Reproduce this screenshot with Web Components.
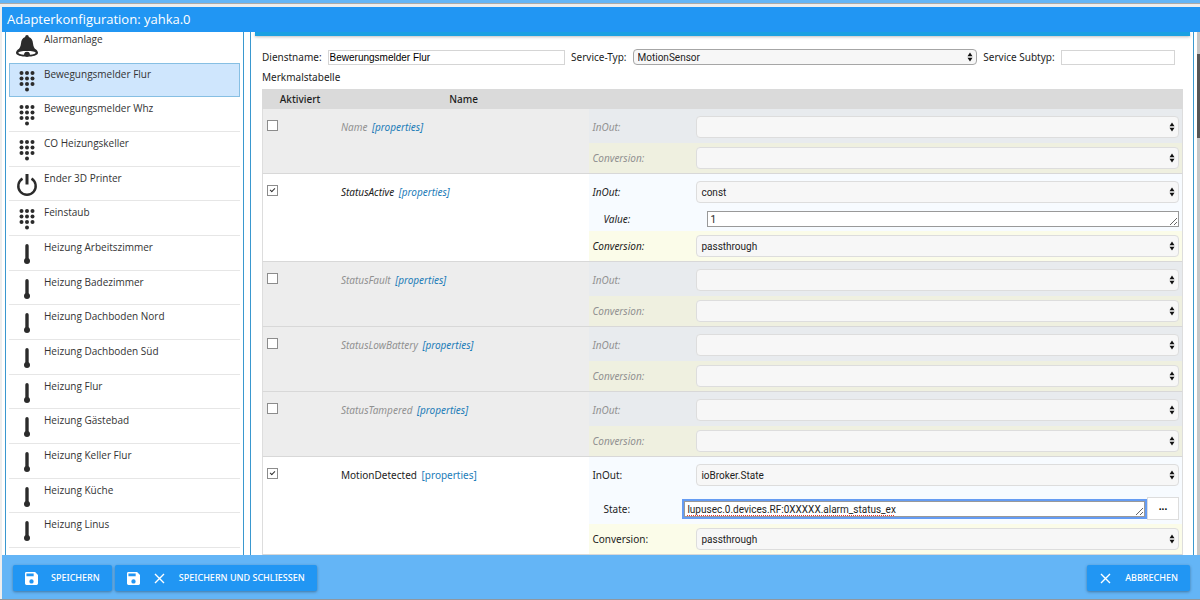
<!DOCTYPE html>
<html lang="de">
<head>
<meta charset="utf-8">
<title>Adapterkonfiguration: yahka.0</title>
<style>
  html, body {
    height: 100%;
    margin: 0;
  }

  body {
    background: #eee;
    color: #1d1d1d;
    font: 10px/16px "Noto Sans", "Open Sans", sans-serif;
    overflow: hidden;
  }
</style>
</head>
<body>
<adapter-dialog heading="Adapterkonfiguration: yahka.0">
  <device-list slot="sidebar"></device-list>
  <service-panel></service-panel>
  <dialog-button slot="save" icons="save">Speichern</dialog-button>
  <dialog-button slot="save" icons="save close">Speichern und schließen</dialog-button>
  <dialog-button slot="cancel" icons="close">Abbrechen</dialog-button>
</adapter-dialog>

<script>
const ICONS = {
  bell: `<svg viewBox="0 0 24 24" width="24" height="24" fill="#2b2b2b">
    <path d="M12 1c-1.100 0-1.800.8-1.800 1.900C7.200 3.800 6.300 6.300 6 9.500c-.3 3-1.300 4.900-3.200 6.500h18.400c-1.900-1.600-2.900-3.500-3.200-6.500-.3-3.200-1.200-5.700-4.200-6.600C13.800 1.800 13.100 1 12 1z"/>
    <path d="M3 15.500C1.700 16.700 1 17.700 1 18.700 1 21.200 6 22.600 12 22.600s11-1.400 11-3.900c0-1-.7-2-2-3.200zM12 17c5 0 8.600.6 8.600 1.700 0 .9-2.300 1.700-5.700 2 .1-1.800-1.200-2.900-2.900-2.900s-3 1.100-2.900 2.900c-3.400-.3-5.700-1.100-5.700-2C3.400 17.600 7 17 12 17z" fill-rule="evenodd"/>
    <circle cx="12" cy="20.500" r="2.400"/>
  </svg>`,
  keypad: `<svg viewBox="0 0 24 24" width="24" height="24" fill="#2b2b2b">
    <circle cx="6.500" cy="4" r="2"/><circle cx="12" cy="4" r="2"/><circle cx="17.500" cy="4" r="2"/>
    <circle cx="6.500" cy="9.500" r="2"/><circle cx="12" cy="9.500" r="2"/><circle cx="17.500" cy="9.500" r="2"/>
    <circle cx="6.500" cy="15" r="2"/><circle cx="12" cy="15" r="2"/><circle cx="17.500" cy="15" r="2"/>
    <circle cx="12" cy="20.500" r="2"/>
  </svg>`,
  power: `<svg viewBox="0 0 24 24" width="24" height="24" fill="none" stroke="#2b2b2b">
    <path d="M7.500 5.600a8.700 8.700 0 1 0 9 0" stroke-width="2.400"/>
    <path d="M12 1v10.500" stroke-width="3"/>
  </svg>`,
  thermometer: `<svg viewBox="0 0 24 24" width="24" height="24" fill="#2b2b2b">
    <rect x="10.300" y="2" width="3.400" height="18" rx="1.700"/>
    <circle cx="12" cy="19" r="3"/>
  </svg>`,
  save: `<svg viewBox="3 3 18 18" width="13" height="13" fill="#fff">
    <path d="M17 3H5a2 2 0 0 0-2 2v14a2 2 0 0 0 2 2h14a2 2 0 0 0 2-2V7l-4-4zm-5 16a3 3 0 1 1 0-6 3 3 0 0 1 0 6zm3-10H5V5h10v4z"/>
  </svg>`,
  close: `<svg viewBox="0 0 13 13" width="13" height="13" fill="none" stroke="#fff" stroke-width="1.400">
    <path d="M2 2l9 9M11 2l-9 9"/>
  </svg>`,
  updown: `<svg viewBox="0 0 6 10" width="6" height="10" fill="#111">
    <path d="M3 .5L5.500 4.200h-5zM3 9.500L.5 5.800h5z"/>
  </svg>`
};

const DEVICES = [
  ['Alarmanlage', 'bell'],
  ['Bewegungsmelder Flur', 'keypad'],
  ['Bewegungsmelder Whz', 'keypad'],
  ['CO Heizungskeller', 'keypad'],
  ['Ender 3D Printer', 'power'],
  ['Feinstaub', 'keypad'],
  ['Heizung Arbeitszimmer', 'thermometer'],
  ['Heizung Badezimmer', 'thermometer'],
  ['Heizung Dachboden Nord', 'thermometer'],
  ['Heizung Dachboden Süd', 'thermometer'],
  ['Heizung Flur', 'thermometer'],
  ['Heizung Gästebad', 'thermometer'],
  ['Heizung Keller Flur', 'thermometer'],
  ['Heizung Küche', 'thermometer'],
  ['Heizung Linus', 'thermometer']
];

const CHARACTERISTICS = [
  { name: 'Name', optional: true },
  { name: 'StatusActive', optional: true, enabled: true, inout: 'const', param: 'Value', value: '1', conversion: 'passthrough' },
  { name: 'StatusFault', optional: true },
  { name: 'StatusLowBattery', optional: true },
  { name: 'StatusTampered', optional: true },
  { name: 'MotionDetected', enabled: true, inout: 'ioBroker.State', param: 'State', value: 'lupusec.0.devices.RF:0XXXXX.alarm_status_ex', conversion: 'passthrough' }
];

/**
 * Dialog frame: title bar, sidebar, main area, footer buttons
 */
class AdapterDialog extends HTMLElement {
  constructor() {
    super();
    this.attachShadow({ mode: 'open' });
  }

  connectedCallback() {
    this.shadowRoot.innerHTML = `
      <style>
        :host {
          display: flex;
          flex-direction: column;
          box-sizing: border-box;
          height: 100vh;
          border-top: 3px solid #64b5f6;
          border-bottom: 1px solid #8f979e;
        }

        header {
          flex: none;
          margin-left: 2px;
          background: #2196f3;
          color: #fff;
        }

        .edge {
          flex: none;
          height: 3px;
          border-top: 1px solid #aaa;
        }

        h1 {
          margin: 0;
          padding: 0 5px;
          font: 400 13px/25px "Open Sans", sans-serif;
        }

        main {
          flex: 1;
          min-height: 0;
          display: flex;
          gap: 6px;
          margin-left: 2px;
          padding-left: 3px;
          background: #fff;
        }

        ::slotted(device-list) {
          flex: 0 0 20%;
          box-sizing: border-box;
        }

        .content {
          flex: 1;
          min-width: 0;
          overflow: hidden;
          border: solid #3a98cf;
          border-width: 0 1px;
        }

        .scrollbar {
          flex: none;
          width: 3px;
          margin-left: -3px;
          background: #c6c6c6;
        }

        .thumb {
          height: 16%;
          margin-top: 22px;
          background: #555;
        }

        footer {
          flex: none;
          display: flex;
          gap: 3px;
          margin-left: 2px;
          padding: 10px 10px 8px 11px;
          background: #64b5f6;
        }

        .spacer {
          flex: 1;
        }
      </style>

      <div class="edge"></div>
      <header><h1>${this.getAttribute('heading')}</h1></header>
      <main>
        <slot name="sidebar"></slot>
        <div class="content"><slot></slot></div>
        <div class="scrollbar"><div class="thumb"></div></div>
      </main>
      <footer>
        <slot name="save"></slot>
        <div class="spacer"></div>
        <slot name="cancel"></slot>
      </footer>
    `;
  }
}

/**
 * Sidebar with the configured devices
 */
class DeviceList extends HTMLElement {
  constructor() {
    super();
    this.attachShadow({ mode: 'open' });
  }

  connectedCallback() {
    this.shadowRoot.innerHTML = `
      <style>
        :host {
          display: block;
          overflow: hidden;
          border: solid #3a98cf;
          border-width: 0 1px;
          font-family: "Open Sans", sans-serif;
        }

        ul {
          display: flex;
          flex-direction: column;
          box-sizing: border-box;
          height: 100%;
          margin: 0;
          padding: 0 3px 7px;
          list-style: none;
        }

        li {
          flex: 1 0 0;
          display: flex;
          border-bottom: 1px solid #e6e6e6;
        }

        /* list is scrolled a little, the first entry is cut off */
        li:first-child {
          margin-top: -4px;
          border-color: transparent;
        }

        li.selected {
          background: #cfe6fd;
          border-color: #86bfe3;
          box-shadow: inset 1px 1px #86bfe3, inset -1px 0 #86bfe3;
        }

        a {
          flex: 1;
          display: flex;
          gap: 5px;
          padding: 3px 6px;
          color: #333;
          text-decoration: none;
        }

        svg {
          flex: none;
          margin-top: 3px;
        }
      </style>

      <ul>
        ${DEVICES.map(([name, icon], i) => `
          <li class="${i === 1 ? 'selected' : ''}"><a href="#">${ICONS[icon]}<span>${name}</span></a></li>
        `).join('')}
      </ul>
    `;
  }
}

/**
 * Label with a select or a textarea.
 * Attributes: label, value, kind (text for a textarea), browse, dimmed
 */
class FieldRow extends HTMLElement {
  constructor() {
    super();
    this.attachShadow({ mode: 'open' });
  }

  connectedCallback() {
    const label = this.getAttribute('label');
    const value = this.getAttribute('value') || '';

    const control = this.getAttribute('kind') === 'text'
      ? `<textarea id="control" rows="1" spellcheck="false">${value}</textarea>`
      : `<div class="select"><select id="control"><option>${value}</option></select>${ICONS.updown}</div>`;

    this.shadowRoot.innerHTML = `
      <style>
        :host {
          display: flex;
          align-items: center;
          padding: 7px 3px 5px 3px;
          background: #f7fbff;
        }

        :host([label="Conversion:"]) {
          padding: 4px 3px;
          background: #fbfce9;
        }

        :host([dimmed]) {
          background: #e8ebee;
        }

        :host([dimmed][label="Conversion:"]) {
          background: #eff0e0;
        }

        :host([kind="text"]) {
          padding: 3px 3px 4px 14px;
        }

        :host([browse]) {
          padding: 6px 3px 4px 14px;
        }

        label {
          flex: 0 0 104px;
        }

        :host([browse]) label {
          flex-basis: 81px;
        }

        .select {
          flex: 1;
          display: flex;
          align-items: center;
          height: 22px;
        }

        select {
          appearance: none;
          flex: 1;
          box-sizing: border-box;
          min-width: 0;
          height: 22px;
          margin: 0;
          padding: 0 4px;
          border: 1px solid #ddd;
          border-radius: 4px;
          background: #f7f7f7;
          color: #1d1d1d;
          font: 10px Roboto, sans-serif;
        }

        svg {
          flex: none;
          margin: 0 4px 0 -10px;
          pointer-events: none;
        }

        textarea {
          flex: 1;
          box-sizing: border-box;
          min-width: 0;
          height: 16px;
          margin: 0;
          padding: 0 2px;
          border: 1px solid #999;
          background: #fff;
          color: #1d1d1d;
          font: 10px/15px Roboto, sans-serif;
          overflow: hidden;
          resize: both;
        }

        :host([browse]) textarea {
          outline: 2px solid #659cf3;
          text-decoration: underline 1px dotted #f0302a;
          text-decoration-skip-ink: none;
          text-underline-offset: 2px;
        }

        button {
          flex: none;
          width: 32px;
          height: 23px;
          margin: 0 0 0 2px;
          padding: 0;
          border: 1px solid #ddd;
          background: #fff;
          font: 700 10px/10px "Noto Sans", sans-serif;
        }
      </style>

      <label for="control">${label}</label>
      ${control}
      ${this.hasAttribute('browse') ? '<button type="button">···</button>' : ''}
    `;
  }
}

/**
 * Service settings and the table of characteristics
 */
class ServicePanel extends HTMLElement {
  constructor() {
    super();
    this.attachShadow({ mode: 'open' });
  }

  connectedCallback() {
    this.render();
  }

  renderRow(item) {
    const dimmed = item.enabled ? '' : 'dimmed';
    const param = item.param
      ? `<field-row kind="text" label="${item.param}:" value="${item.value}" ${item.param === 'State' ? 'browse' : ''}></field-row>`
      : '';

    return `
      <tr class="${dimmed} ${item.optional ? 'optional' : ''}">
        <td class="check"><input type="checkbox" aria-label="${item.name}" ${item.enabled ? 'checked' : ''}></td>
        <td class="name">${item.name} <a href="#">[properties]</a></td>
        <td class="fields">
          <field-row label="InOut:" value="${item.inout || ''}" ${dimmed}></field-row>
          ${param}
          <field-row label="Conversion:" value="${item.conversion || ''}" ${dimmed}></field-row>
        </td>
      </tr>
    `;
  }

  render() {
    this.shadowRoot.innerHTML = `
      <style>
        :host {
          display: block;
        }

        .tabs {
          height: 4px;
          margin: 0 3px 0 4px;
          background: #1ba1e2;
          box-shadow: 0 1px 3px rgba(0, 0, 0, .25);
        }

        .body {
          padding: 13px 10px 0 11px;
        }

        form {
          display: flex;
          align-items: center;
          gap: 6px;
          margin-right: 8px;
        }

        input:not([type]) {
          box-sizing: border-box;
          min-width: 0;
          height: 15px;
          margin: 0;
          padding: 0 1px;
          border: 1px solid #d5d5d5;
          font: 10px "Liberation Sans", sans-serif;
        }

        #name {
          flex: 237 1 0;
        }

        #subtype {
          flex: 112 1 0;
        }

        .select {
          flex: 350 1 0;
          display: flex;
          align-items: center;
        }

        select {
          appearance: none;
          flex: 1;
          box-sizing: border-box;
          min-width: 0;
          height: 16px;
          margin: 0;
          padding: 0 4px;
          border: 1px solid #a6a6a6;
          border-radius: 4px;
          background: #f7f7f7;
          color: #1d1d1d;
          font: 10px Roboto, sans-serif;
        }

        svg {
          flex: none;
          margin: 0 4px 0 -10px;
          pointer-events: none;
        }

        h2 {
          margin: 4px 0;
          font: inherit;
        }

        table {
          width: 100%;
          border-collapse: separate;
          border-spacing: 0;
          table-layout: fixed;
        }

        th {
          padding: 2px 0;
          background: #dadada;
          font-weight: 500;
        }

        th:nth-child(1) {
          width: 76px;
        }

        th:nth-child(2) {
          width: 27.3%;
        }

        td {
          padding: 0;
          vertical-align: top;
          border-bottom: 1px solid #d8d8d8;
        }

        .dimmed td {
          background: #ededed;
          color: #919191;
        }

        .optional {
          font-style: italic;
        }

        .check {
          border-left: 1px solid #ddd;
        }

        .fields {
          border-right: 1px solid #ddd;
        }

        .name {
          padding: 10px 3px 0;
        }

        a {
          margin-left: 2px;
          color: #1c7cb8;
          text-decoration: none;
        }

        input[type="checkbox"] {
          appearance: none;
          display: flex;
          justify-content: center;
          box-sizing: border-box;
          width: 11px;
          height: 11px;
          margin: 11px 0 0 4px;
          border: 1px solid #8c8c8c;
          background: #fff;
        }

        input:checked::before {
          content: "";
          width: 2px;
          height: 4px;
          margin-top: 1px;
          border: solid #333;
          border-width: 0 1px 1px 0;
          transform: rotate(45deg);
        }
      </style>

      <div class="tabs"></div>
      <div class="body">
        <form>
          <label for="name">Dienstname:</label>
          <input id="name" value="Bewerungsmelder Flur">
          <label for="type">Service-Typ:</label>
          <div class="select"><select id="type"><option>MotionSensor</option></select>${ICONS.updown}</div>
          <label for="subtype">Service Subtyp:</label>
          <input id="subtype">
        </form>
        <h2>Merkmalstabelle</h2>
        <table>
          <thead>
            <tr><th>Aktiviert</th><th>Name</th><th></th></tr>
          </thead>
          <tbody>${CHARACTERISTICS.map(item => this.renderRow(item)).join('')}</tbody>
        </table>
      </div>
    `;
  }
}

/**
 * Raised footer button with one or more icons
 */
class DialogButton extends HTMLElement {
  constructor() {
    super();
    this.attachShadow({ mode: 'open' });
  }

  connectedCallback() {
    const icons = this.getAttribute('icons').split(' ').map(name => ICONS[name]).join('');

    this.shadowRoot.innerHTML = `
      <style>
        :host {
          display: block;
        }

        button {
          display: flex;
          align-items: center;
          gap: 13px;
          height: 26px;
          padding: 0 12px;
          border: 0;
          border-radius: 2px;
          background: #2196f3;
          box-shadow: 0 1px 3px rgba(0, 0, 0, .35);
          color: #fff;
          font: 500 9px/26px "Noto Sans", sans-serif;
          text-transform: uppercase;
        }
      </style>

      <button type="button">${icons}<span><slot></slot></span></button>
    `;
  }
}

customElements.define('field-row', FieldRow);
customElements.define('device-list', DeviceList);
customElements.define('service-panel', ServicePanel);
customElements.define('dialog-button', DialogButton);
customElements.define('adapter-dialog', AdapterDialog);
</script>
</body>
</html>
